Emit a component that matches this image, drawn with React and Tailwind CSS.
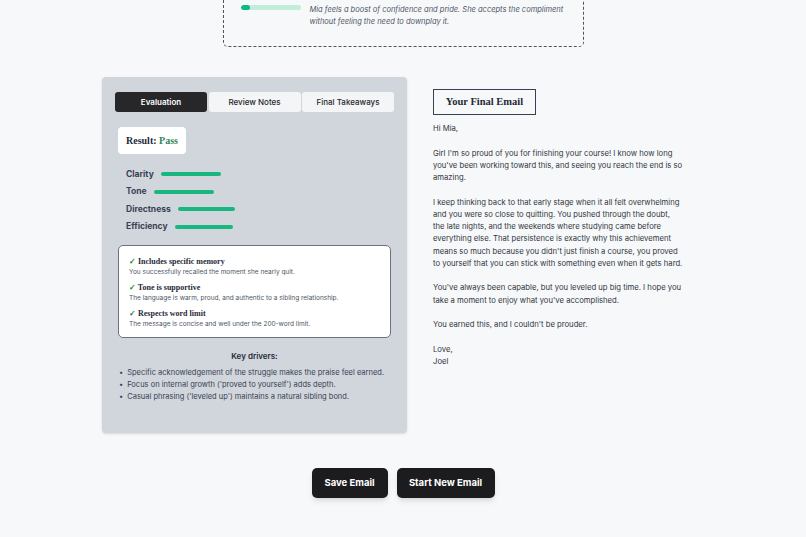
import { useState } from 'react';

const metrics = [
    { label: 'Clarity', width: 60 },
    { label: 'Tone', width: 60 },
    { label: 'Directness', width: 57 },
    { label: 'Efficiency', width: 58 },
];

const checks = [
    { title: 'Includes specific memory', detail: 'You successfully recalled the moment she nearly quit.' },
    { title: 'Tone is supportive', detail: 'The language is warm, proud, and authentic to a sibling relationship.' },
    { title: 'Respects word limit', detail: 'The message is concise and well under the 200-word limit.' },
];

const drivers = [
    'Specific acknowledgement of the struggle makes the praise feel earned.',
    "Focus on internal growth ('proved to yourself') adds depth.",
    "Casual phrasing ('leveled up') maintains a natural sibling bond.",
];

const tabs = ['Evaluation', 'Review Notes', 'Final Takeaways'];

const serif = "font-['Liberation_Serif',serif]";

export default function App() {
    const [tab, setTab] = useState('Evaluation');

    return (
        <div className="min-h-[537px] bg-[#f7f8fa] font-['Inter',sans-serif] text-[#374151]">
            {/* Previous step: reaction preview */}
            <div className="mx-auto -mt-[20px] flex w-[361px] gap-[9px] rounded-[5px] border-[1.5px] border-dashed border-[#4b5563] pt-[23px] pr-[8px] pb-[18px] pl-[17px]">
                <div className="mt-[1px] h-[5px] w-[60px] shrink-0 overflow-hidden rounded-full bg-[#c3eddb]">
                    <div className="h-full w-[9px] rounded-full bg-[#10b981]" />
                </div>
                <p className="text-[7.5px] italic leading-[12px] text-[#4b5563]">
                    Mia feels a boost of confidence and pride. She accepts the compliment without feeling the need to downplay it.
                </p>
            </div>

            <div className="mx-auto mt-[30px] grid w-[602px] grid-cols-[305px_1fr] gap-[26px]">
                {/* Evaluation panel */}
                <div className="h-[356px] rounded-[4px] bg-[#d1d5dc] px-[13px] pt-[15px] shadow-sm">
                    <div className="flex gap-[1.5px]">
                        {tabs.map(t => (
                            <button
                                key={t}
                                onClick={() => setTab(t)}
                                className={
                                    t === tab
                                        ? 'h-[20px] flex-1 rounded-[3px] bg-[#27272a] text-[8px] font-semibold text-white'
                                        : 'h-[20px] flex-1 rounded-[3px] bg-[#f4f5f7] text-[8px] font-medium text-[#27272a]'
                                }
                            >
                                {t}
                            </button>
                        ))}
                    </div>

                    <div className="mt-[15px] ml-[3px] flex h-[27px] w-fit items-center rounded-[4px] bg-white px-[8px]">
                        <span className={`${serif} text-[10px] font-bold text-[#1f2937]`}>
                            Result: <span className="text-[#2f855a]">Pass</span>
                        </span>
                    </div>

                    <div className="mt-[14px] ml-[11px] flex flex-col gap-[5.5px]">
                        {metrics.map(m => (
                            <div key={m.label} className="flex h-[12px] items-center gap-[7px]">
                                <span className="text-[8.5px] font-bold text-[#374151]">{m.label}</span>
                                <div className="h-[4px] rounded-full bg-[#19b77f]" style={{ width: m.width }} />
                            </div>
                        ))}
                    </div>

                    <div className="mt-[12px] ml-[3px] w-[273px] rounded-[5px] border border-[#6b7280] bg-white px-[10px] pt-[10px] pb-[8px]">
                        {checks.map(c => (
                            <div key={c.title} className="mb-[5px] last:mb-0">
                                <p className={`${serif} text-[8px] font-bold leading-[11px] text-[#1f2937]`}>
                                    <span className="text-[#15803d]">✓</span> {c.title}
                                </p>
                                <p className="text-[6.5px] leading-[10px] text-[#4b5563]">{c.detail}</p>
                            </div>
                        ))}
                    </div>

                    <p className="mt-[12px] text-center text-[8px] font-semibold text-[#1f2937]">Key drivers:</p>
                    <ul className="mt-[5px] ml-[4px] text-[7.5px] leading-[12px] text-[#374151]">
                        {drivers.map(d => (
                            <li key={d} className="flex gap-[4px]">
                                <span>•</span>
                                <span>{d}</span>
                            </li>
                        ))}
                    </ul>
                </div>

                {/* Final email */}
                <div className="pt-[12px]">
                    <div className="flex h-[26px] w-[103px] items-center justify-center border-[1.5px] border-[#374151]">
                        <span className={`${serif} text-[10.5px] font-bold text-[#1f2937]`}>Your Final Email</span>
                    </div>
                    <div className="mt-[8px] flex w-[250px] flex-col gap-[12.25px] text-[7.7px] leading-[12.25px] text-[#2f3640]">
                        <p>Hi Mia,</p>
                        <p>Girl I'm so proud of you for finishing your course! I know how long you've been working toward this, and seeing you reach the end is so amazing.</p>
                        <p>I keep thinking back to that early stage when it all felt overwhelming and you were so close to quitting. You pushed through the doubt, the late nights, and the weekends where studying came before everything else. That persistence is exactly why this achievement means so much because you didn't just finish a course, you proved to yourself that you can stick with something even when it gets hard.</p>
                        <p>You've always been capable, but you leveled up big time. I hope you take a moment to enjoy what you've accomplished.</p>
                        <p>You earned this, and I couldn't be prouder.</p>
                        <p>Love,<br />Joel</p>
                    </div>
                </div>
            </div>

            <div className="mt-[35px] flex justify-center gap-[9px] pb-[39px]">
                <button className="h-[30px] w-[76px] rounded-[5px] bg-[#1c1c1e] text-[9.5px] font-bold text-white shadow-md">
                    Save Email
                </button>
                <button className="h-[30px] w-[98px] rounded-[5px] bg-[#1c1c1e] text-[9.5px] font-bold text-white shadow-md">
                    Start New Email
                </button>
            </div>
        </div>
    );
}
